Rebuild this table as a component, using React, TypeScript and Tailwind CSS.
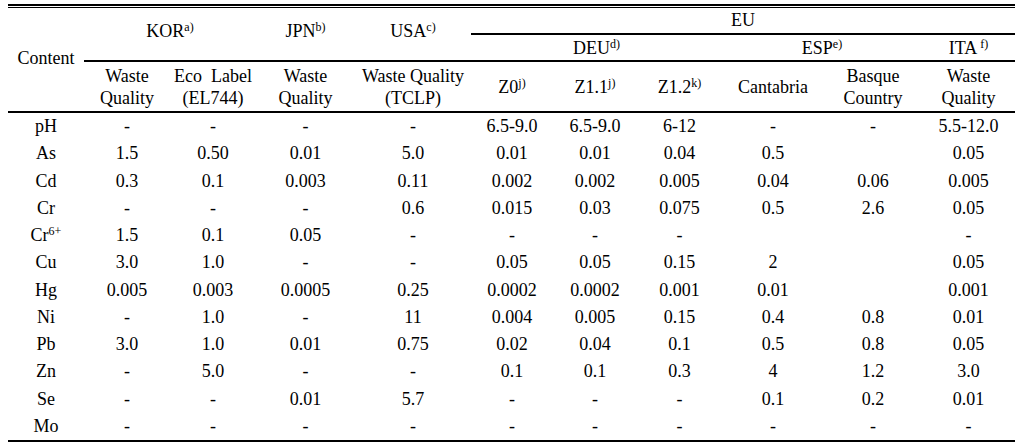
import React from "react";

const grid =
  "grid grid-cols-[76px_86px_86px_99px_116px_82px_84px_85px_102px_98px_93px]";

const Sup = ({ children, gap = false }: { children: React.ReactNode; gap?: boolean }) => (
  <sup className={"text-[12px] " + (gap ? "ml-[3px]" : "")}>{children}</sup>
);

type Row = { name: React.ReactNode; vals: string[] };

const rows: Row[] = [
  { name: "pH", vals: ["-", "-", "-", "-", "6.5-9.0", "6.5-9.0", "6-12", "-", "-", "5.5-12.0"] },
  { name: "As", vals: ["1.5", "0.50", "0.01", "5.0", "0.01", "0.01", "0.04", "0.5", "", "0.05"] },
  { name: "Cd", vals: ["0.3", "0.1", "0.003", "0.11", "0.002", "0.002", "0.005", "0.04", "0.06", "0.005"] },
  { name: "Cr", vals: ["-", "-", "-", "0.6", "0.015", "0.03", "0.075", "0.5", "2.6", "0.05"] },
  {
    name: (
      <span>
        Cr<Sup>6+</Sup>
      </span>
    ),
    vals: ["1.5", "0.1", "0.05", "-", "-", "-", "-", "", "", "-"],
  },
  { name: "Cu", vals: ["3.0", "1.0", "-", "-", "0.05", "0.05", "0.15", "2", "", "0.05"] },
  { name: "Hg", vals: ["0.005", "0.003", "0.0005", "0.25", "0.0002", "0.0002", "0.001", "0.01", "", "0.001"] },
  { name: "Ni", vals: ["-", "1.0", "-", "11", "0.004", "0.005", "0.15", "0.4", "0.8", "0.01"] },
  { name: "Pb", vals: ["3.0", "1.0", "0.01", "0.75", "0.02", "0.04", "0.1", "0.5", "0.8", "0.05"] },
  { name: "Zn", vals: ["-", "5.0", "-", "-", "0.1", "0.1", "0.3", "4", "1.2", "3.0"] },
  { name: "Se", vals: ["-", "-", "0.01", "5.7", "-", "-", "-", "0.1", "0.2", "0.01"] },
  { name: "Mo", vals: ["-", "-", "-", "-", "-", "-", "-", "-", "-", "-"] },
];

const cell = "flex items-center justify-center text-center border-black";

export default function App() {
  return (
    <div className="bg-white w-[1020px] h-[443px] overflow-hidden pt-[4px] pl-[8px] font-['Liberation_Serif',serif] text-[18px] text-black">
      <div className="w-[1007px]">
        <div className="h-[2px] bg-black" />
        <div className="h-[1px] mt-[1px] bg-black" />
        <div className={grid + " grid-rows-[27px_27px_51px] leading-[22px]"}>
          <div className={cell + " col-start-1 row-start-1 row-span-3 border-b-2 pb-[4px]"}>Content</div>
          <div className={cell + " col-start-2 col-span-2 row-start-1 row-span-2 border-b-2 pb-[6px]"}>
            <span>
              KOR<Sup>a)</Sup>
            </span>
          </div>
          <div className={cell + " col-start-4 row-start-1 row-span-2 border-b-2 pb-[6px]"}>
            <span>
              JPN<Sup>b)</Sup>
            </span>
          </div>
          <div className={cell + " col-start-5 row-start-1 row-span-2 border-b-2 pb-[6px]"}>
            <span>
              USA<Sup>c)</Sup>
            </span>
          </div>
          <div className={cell + " col-start-6 col-span-6 row-start-1 border-b-2 pb-[2px]"}>EU</div>
          <div className={cell + " col-start-6 col-span-3 row-start-2 border-b-2"}>
            <span>
              DEU<Sup>d)</Sup>
            </span>
          </div>
          <div className={cell + " col-start-9 col-span-2 row-start-2 border-b-2"}>
            <span>
              ESP<Sup>e)</Sup>
            </span>
          </div>
          <div className={cell + " col-start-11 row-start-2 border-b-2"}>
            <span>
              ITA<Sup gap>f)</Sup>
            </span>
          </div>

          <div className={cell + " col-start-2 row-start-3 border-b-2"}>
            Waste
            <br />
            Quality
          </div>
          <div className={cell + " col-start-3 row-start-3 border-b-2"}>
            {"Eco\u00a0 Label"}
            <br />
            (EL744)
          </div>
          <div className={cell + " col-start-4 row-start-3 border-b-2"}>
            Waste
            <br />
            Quality
          </div>
          <div className={cell + " col-start-5 row-start-3 border-b-2"}>
            Waste Quality
            <br />
            (TCLP)
          </div>
          <div className={cell + " col-start-6 row-start-3 border-b-2"}>
            <span>
              Z0<Sup>j)</Sup>
            </span>
          </div>
          <div className={cell + " col-start-7 row-start-3 border-b-2"}>
            <span>
              Z1.1<Sup>j)</Sup>
            </span>
          </div>
          <div className={cell + " col-start-8 row-start-3 border-b-2"}>
            <span>
              Z1.2<Sup>k)</Sup>
            </span>
          </div>
          <div className={cell + " col-start-9 row-start-3 border-b-2"}>Cantabria</div>
          <div className={cell + " col-start-10 row-start-3 border-b-2"}>
            Basque
            <br />
            Country
          </div>
          <div className={cell + " col-start-11 row-start-3 border-b-2"}>
            Waste
            <br />
            Quality
          </div>
        </div>

        <div className={grid + " auto-rows-[27.25px] border-b-2 border-black"}>
          {rows.map((r, i) => (
            <React.Fragment key={i}>
              <div className="flex items-center justify-center">{r.name}</div>
              {r.vals.map((v, j) => (
                <div key={j} className="flex items-center justify-center">
                  {v}
                </div>
              ))}
            </React.Fragment>
          ))}
        </div>
      </div>
    </div>
  );
}
